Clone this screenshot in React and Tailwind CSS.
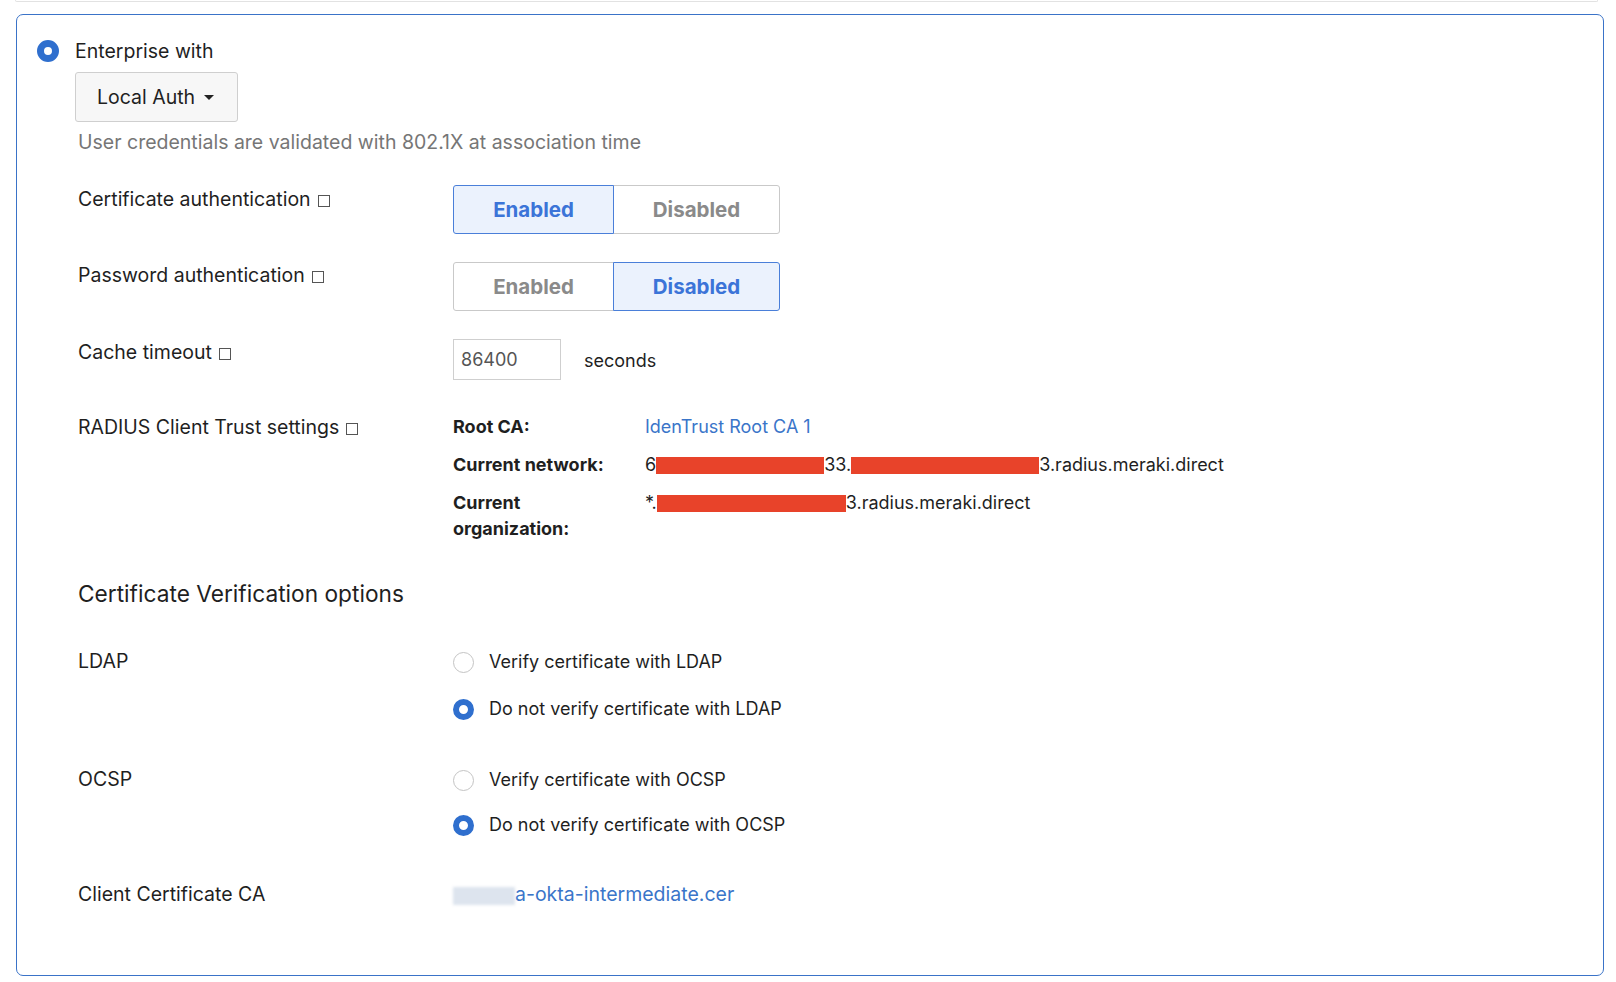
import React from "react";

function Radio({ checked, big }) {
  if (checked) {
    return (
      <span
        className={
          "inline-block shrink-0 rounded-full bg-white border-[#2f6fce] " +
          (big ? "w-[22px] h-[22px] border-[7px]" : "w-[21px] h-[21px] border-[6px]")
        }
      />
    );
  }
  return <span className="inline-block shrink-0 w-[21px] h-[21px] rounded-full bg-white border border-[#c4c4c4]" />;
}

function Seg({ active }) {
  const on = "bg-[#ebf2fd] border-[#4a7fd9] text-[#3b74d8] z-10";
  const off = "bg-white border-[#c9c9c9] text-[#8a8a8a]";
  return (
    <div className="flex w-[327px] h-[49px]">
      <div
        className={
          "w-[161px] -mr-px flex items-center justify-center border rounded-l-[3px] font-bold text-[20.5px] " +
          (active === 0 ? on : off)
        }
      >
        Enabled
      </div>
      <div
        className={
          "flex-1 flex items-center justify-center border rounded-r-[3px] font-bold text-[20.5px] " +
          (active === 1 ? on : off)
        }
      >
        Disabled
      </div>
    </div>
  );
}

function Sq() {
  return <span className="inline-block w-[12px] h-[12px] border border-[#555] ml-[7px] align-[-1px]" />;
}

function Red({ w }) {
  return <span className="inline-block h-[17px] bg-[#e8432a] align-[-3px]" style={{ width: w }} />;
}

export default function App() {
  return (
    <div
      className="w-[1616px] h-[982px] bg-white text-[#1f1f1f] text-[19.5px] leading-[24px]"
      style={{ fontFamily: "Inter, 'Noto Sans', sans-serif" }}
    >
      <div className="mx-[15px] w-[1583px] h-[2px] border-b border-x border-[#e2e2e2] rounded-b-[4px]" />
      <div className="ml-[16px] mt-[12px] w-[1588px] h-[962px] border border-[#3a73c8] rounded-[7px]">
        <div className="flex items-center pl-[20px] pt-[24px]">
          <Radio checked big />
          <span className="ml-[16px]">Enterprise with</span>
        </div>
        <div className="pl-[58px]">
          <div className="mt-[9px] w-[163px] h-[50px] bg-[#f7f7f7] border border-[#cfcfcf] rounded-[3px] flex items-center pl-[21px]">
            Local Auth
            <span className="ml-[9px] w-0 h-0 border-l-[5px] border-r-[5px] border-t-[5px] border-l-transparent border-r-transparent border-t-[#222]" />
          </div>
          <div className="mt-[8px] ml-[3px] text-[#767676]">User credentials are validated with 802.1X at association time</div>

          <div className="mt-[31px] flex items-start">
            <div className="w-[378px] pl-[3px] pt-[2px]">Certificate authentication<Sq /></div>
            <Seg active={0} />
          </div>
          <div className="mt-[28px] flex items-start">
            <div className="w-[378px] pl-[3px] pt-[1px]">Password authentication<Sq /></div>
            <Seg active={1} />
          </div>
          <div className="mt-[28px] flex items-start">
            <div className="w-[378px] pl-[3px] pt-[1px]">Cache timeout<Sq /></div>
            <div className="flex items-center text-[18px]">
              <div className="w-[108px] h-[41px] border border-[#cfcfcf] flex items-center pl-[7px] text-[#555]">86400</div>
              <span className="ml-[23px] mt-[2px]">seconds</span>
            </div>
          </div>

          <div className="mt-[34px] flex items-start">
            <div className="w-[378px] pl-[3px] pt-[1px]">RADIUS Client Trust settings<Sq /></div>
            <div className="flex flex-col gap-[12px] text-[18px] leading-[26px]">
              <div className="flex">
                <div className="w-[192px] pr-[30px] font-bold">Root CA:</div>
                <div className="text-[#3a75c9]">IdenTrust Root CA 1</div>
              </div>
              <div className="flex">
                <div className="w-[192px] pr-[30px] font-bold">Current network:</div>
                <div className="whitespace-nowrap">
                  6<Red w={168} />33.<Red w={188} />3.radius.meraki.direct
                </div>
              </div>
              <div className="flex">
                <div className="w-[192px] pr-[30px] font-bold">Current organization:</div>
                <div className="whitespace-nowrap">
                  *.<Red w={189} />3.radius.meraki.direct
                </div>
              </div>
            </div>
          </div>

          <div className="mt-[37px] ml-[3px] text-[22.7px] leading-[30px]">Certificate Verification options</div>

          <div className="mt-[40px] flex items-start">
            <div className="w-[378px] pl-[3px]">LDAP</div>
            <div className="mt-[1px] flex flex-col gap-[23px] text-[18px]">
              <div className="flex items-center"><Radio /><span className="ml-[15px]">Verify certificate with LDAP</span></div>
              <div className="flex items-center"><Radio checked /><span className="ml-[15px]">Do not verify certificate with LDAP</span></div>
            </div>
          </div>
          <div className="mt-[46px] flex items-start">
            <div className="w-[378px] pl-[3px]">OCSP</div>
            <div className="mt-[1px] flex flex-col gap-[21px] text-[18px]">
              <div className="flex items-center"><Radio /><span className="ml-[15px]">Verify certificate with OCSP</span></div>
              <div className="flex items-center"><Radio checked /><span className="ml-[15px]">Do not verify certificate with OCSP</span></div>
            </div>
          </div>
          <div className="mt-[45px] flex items-start">
            <div className="w-[378px] pl-[3px]">Client Certificate CA</div>
            <div className="flex items-center text-[#3a75c9]">
              <span className="inline-block w-[62px] h-[18px] bg-[#dde4ee] blur-[1.5px] mt-[4px]" />
              <span>a-okta-intermediate.cer</span>
            </div>
          </div>
        </div>
      </div>
    </div>
  );
}
